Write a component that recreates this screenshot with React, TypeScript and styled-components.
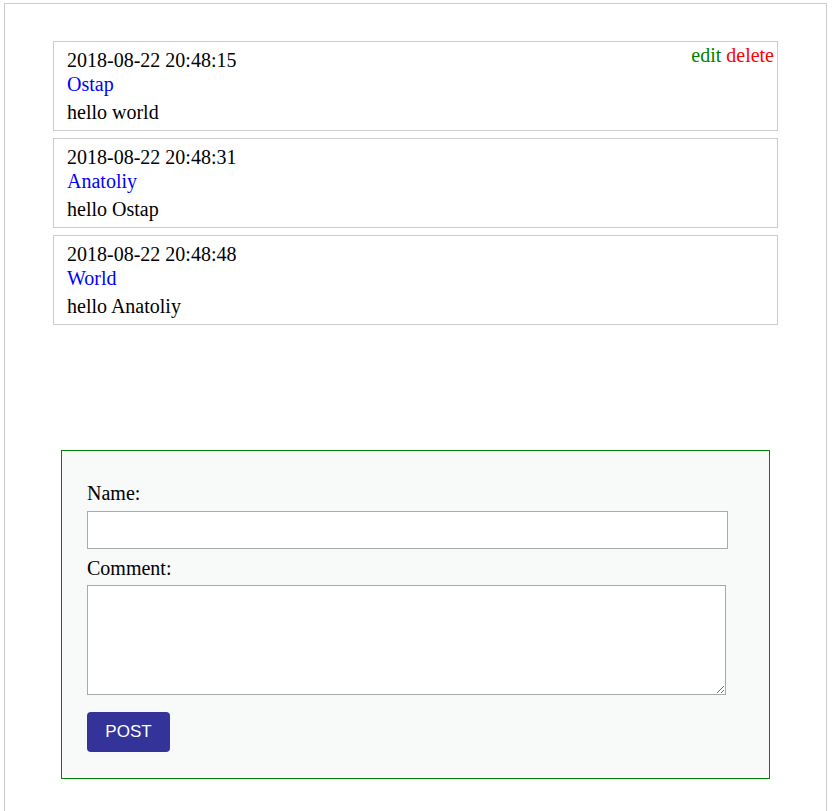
import React from "react";
import styled, { createGlobalStyle } from "styled-components";

const Global = createGlobalStyle`
  html, body { margin: 0; padding: 0; background: #fff; }
  body { font-family: "Liberation Serif", "Times New Roman", serif; font-size: 20px; color: #000; }
`;

const Page = styled.div`
  box-sizing: border-box;
  width: 823px;
  min-height: 820px;
  margin: 3px 0 0 4px;
  border: 1px solid #ccc;
  border-bottom: none;
  padding-top: 37px;
`;

const List = styled.div`
  margin: 0 48px 0 48px;
  display: flex;
  flex-direction: column;
  gap: 6.5px;
`;

const Card = styled.div`
  position: relative;
  box-sizing: border-box;
  border: 1px solid #ccc;
  padding: 6px 13px 6.3px;
  line-height: 24px;
`;

const Actions = styled.div`
  position: absolute;
  top: 1px;
  right: 3px;
  display: flex;
  gap: 5px;
`;

const ActionLink = styled.span<{ $color: string }>`
  color: ${(p) => p.$color};
  cursor: pointer;
`;

const DateLine = styled.div``;

const Author = styled.div`
  color: #0000ff;
`;

const Body = styled.div`
  margin-top: 4px;
`;

const FormBox = styled.form`
  box-sizing: border-box;
  width: 709px;
  margin: 125.1px 0 0 56px;
  border: 1px solid #008000;
  background: #f8f9f9;
  padding: 30px 25px 26px;
  line-height: 24px;
`;

const Label = styled.label<{ $gap?: number }>`
  display: block;
  margin-top: ${(p) => p.$gap ?? 0}px;
`;

const NameInput = styled.input`
  box-sizing: border-box;
  display: block;
  width: 641px;
  height: 38px;
  margin: 6px 0 0;
  border: 1px solid #a9a9a9;
  background: #fff;
  outline: none;
`;

const CommentArea = styled.textarea`
  box-sizing: border-box;
  display: block;
  width: 639px;
  height: 110px;
  margin: 5px 0 17px;
  border: 1px solid #a9a9a9;
  background: #fff;
  outline: none;
`;

const PostButton = styled.button`
  box-sizing: border-box;
  display: block;
  width: 83px;
  height: 40px;
  border: none;
  border-radius: 4px;
  background: #333399;
  color: #fff;
  font-family: "Liberation Sans", Arial, sans-serif;
  font-size: 17px;
  cursor: pointer;
`;

const comments = [
  { date: "2018-08-22 20:48:15", name: "Ostap", text: "hello world", actions: true },
  { date: "2018-08-22 20:48:31", name: "Anatoliy", text: "hello Ostap", actions: false },
  { date: "2018-08-22 20:48:48", name: "World", text: "hello Anatoliy", actions: false },
];

export default function App() {
  return (
    <>
      <Global />
      <Page>
        <List>
          {comments.map((c) => (
            <Card key={c.date}>
              {c.actions && (
                <Actions>
                  <ActionLink $color="#008000">edit</ActionLink>
                  <ActionLink $color="#ff0000">delete</ActionLink>
                </Actions>
              )}
              <DateLine>{c.date}</DateLine>
              <Author>{c.name}</Author>
              <Body>{c.text}</Body>
            </Card>
          ))}
        </List>
        <FormBox onSubmit={(e) => e.preventDefault()}>
          <Label>Name:</Label>
          <NameInput type="text" />
          <Label $gap={7}>Comment:</Label>
          <CommentArea />
          <PostButton type="submit">POST</PostButton>
        </FormBox>
      </Page>
    </>
  );
}
